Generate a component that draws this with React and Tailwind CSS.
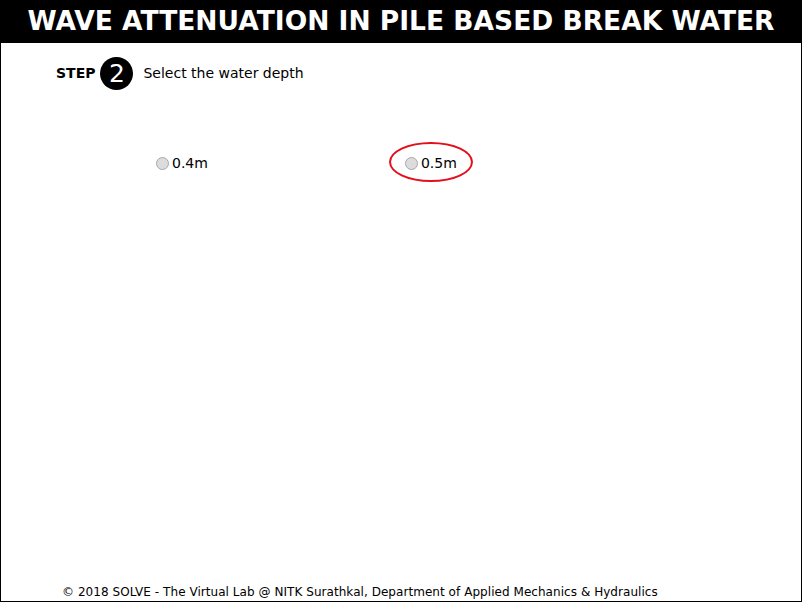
export default function App() {
  const depths = [
    { label: "0.4m", marked: false },
    { label: "0.5m", marked: true },
  ];

  return (
    <div className="flex h-[602px] w-[802px] flex-col bg-white font-['DejaVu_Sans',Verdana,sans-serif] text-black">
      <header className="flex h-[43px] items-center justify-center bg-black">
        <h1 className="text-[26.5px] font-bold leading-none text-white">
          WAVE ATTENUATION IN PILE BASED BREAK WATER
        </h1>
      </header>

      <main className="flex flex-1 flex-col border-x border-b border-black">
        <div className="mt-[14px] flex items-center pl-[55px]">
          <span className="text-[14px] font-bold">STEP</span>
          <span className="ml-[5px] flex h-[33px] w-[33px] items-center justify-center rounded-full bg-black text-[25px] leading-none text-white">
            2
          </span>
          <span className="ml-[10px] text-[14px]">Select the water depth</span>
        </div>

        <div className="mt-[63px] flex items-center pl-[155px]">
          {depths.map((depth) => (
            <label
              key={depth.label}
              className={
                depth.marked
                  ? "relative ml-[197px] flex items-center gap-[3px] text-[14px]"
                  : "flex items-center gap-[3px] text-[14px]"
              }
            >
              <span className="inline-block h-[13px] w-[13px] rounded-full border border-[#a8a8a8] bg-[#dcdcdc]" />
              {depth.label}
              {depth.marked ? (
                <span className="absolute left-[-16px] top-[-11px] h-[40px] w-[84px] rounded-[50%] border-[2.5px] border-[#e3101c]" />
              ) : null}
            </label>
          ))}
        </div>

        <footer className="mt-auto pb-0 pl-[61px] text-[12px] tracking-[0.05px]">
          © 2018 SOLVE - The Virtual Lab @ NITK Surathkal, Department of Applied Mechanics &amp; Hydraulics
        </footer>
      </main>
    </div>
  );
}
